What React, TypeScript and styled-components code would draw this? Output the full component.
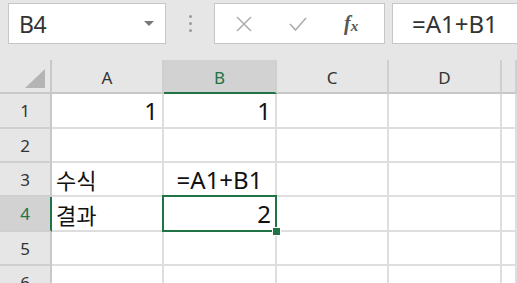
import React from "react";
import styled, { createGlobalStyle } from "styled-components";

const Global = createGlobalStyle`
  html, body { margin: 0; padding: 0; background: #e6e6e6; overflow: hidden; }
  body { width: 517px; height: 283px; }
`;

const Page = styled.div`
  width: 517px;
  height: 283px;
  overflow: hidden;
  background: #e6e6e6;
  font-family: "Noto Sans", "Open Sans", sans-serif;
`;

const Toolbar = styled.div`
  height: 60px;
  display: flex;
  align-items: flex-start;
  padding: 3px 0 0 8px;
  box-sizing: border-box;
  overflow: hidden;
`;

const Box = styled.div<{ $w: number; $open?: boolean }>`
  width: ${(p) => p.$w}px;
  height: 41px;
  box-sizing: border-box;
  background: #fff;
  border: 1px solid #c6c6c6;
  border-right-color: ${(p) => (p.$open ? "transparent" : "#c6c6c6")};
  display: flex;
  align-items: center;
  flex-shrink: 0;
`;

const NameText = styled.span`
  flex: 1;
  padding-left: 10px;
  font-size: 23px;
  color: #333;
  letter-spacing: -0.5px;
`;

const Caret = styled.span`
  width: 0;
  height: 0;
  border-left: 5px solid transparent;
  border-right: 5px solid transparent;
  border-top: 5px solid #777;
  margin-right: 11px;
`;

const Dots = styled.div`
  width: 48px;
  height: 41px;
  flex-shrink: 0;
  display: flex;
  flex-direction: column;
  align-items: center;
  justify-content: center;
  gap: 4px;
  span {
    width: 3px;
    height: 3px;
    border-radius: 50%;
    background: #9a9a9a;
  }
`;

const FxIcons = styled.div`
  flex: 1;
  display: flex;
  align-items: center;
  padding-left: 20px;
  gap: 35px;
`;

const Fx = styled.span`
  font-family: "Liberation Serif", serif;
  font-style: italic;
  font-weight: bold;
  font-size: 20px;
  color: #555;
  margin-left: 1px;
  sub {
    font-size: 15px;
    vertical-align: baseline;
    position: relative;
    top: 1px;
  }
`;

const FormulaText = styled.span`
  padding-left: 19px;
  font-size: 24px;
  color: #333;
  white-space: nowrap;
`;

const Grid = styled.div`
  display: grid;
  grid-template-columns: 52px 112px 113px 112px 113px 1fr;
  grid-template-rows: 34px 35px 34px 34px 35px 34px 34px;
  background: #fff;
`;

const Corner = styled.div`
  background: #e6e6e6;
  border-right: 2px solid #c8c8c8;
  border-bottom: 2px solid #c8c8c8;
  position: relative;
  &::after {
    content: "";
    position: absolute;
    right: 5px;
    bottom: 4px;
    width: 0;
    height: 0;
    border-left: 20px solid transparent;
    border-bottom: 19px solid #b4b4b4;
  }
`;

const ColHead = styled.div<{ $sel?: boolean }>`
  background: ${(p) => (p.$sel ? "#d2d2d2" : "#e6e6e6")};
  color: ${(p) => (p.$sel ? "#217346" : "#333")};
  border-right: 2px solid #cfcfcf;
  border-bottom: 2px solid ${(p) => (p.$sel ? "#217346" : "#c8c8c8")};
  display: flex;
  align-items: center;
  justify-content: center;
  font-size: 17px;
  padding-top: 2px;
  box-sizing: border-box;
`;

const RowHead = styled.div<{ $sel?: boolean }>`
  background: ${(p) => (p.$sel ? "#d2d2d2" : "#e6e6e6")};
  color: ${(p) => (p.$sel ? "#217346" : "#333")};
  border-right: 2px solid ${(p) => (p.$sel ? "#217346" : "#c8c8c8")};
  border-bottom: 2px solid #cfcfcf;
  display: flex;
  align-items: center;
  justify-content: center;
  font-size: 17px;
  box-sizing: border-box;
`;

const Cell = styled.div<{ $align?: "left" | "right" | "center" }>`
  position: relative;
  border-right: 2px solid #dedede;
  border-bottom: 2px solid #dedede;
  display: flex;
  align-items: center;
  justify-content: ${(p) =>
    p.$align === "right" ? "flex-end" : p.$align === "center" ? "center" : "flex-start"};
  padding: 0 4px 0 4px;
  box-sizing: border-box;
  font-family: "Noto Sans", "Noto Sans CJK KR", sans-serif;
  font-size: 24px;
  color: #111;
  white-space: nowrap;
`;

const Hangul = styled.span`
  font-family: "Noto Sans CJK KR", sans-serif;
  font-size: 22px;
  font-weight: 400;
`;

const Selection = styled.div`
  position: absolute;
  z-index: 2;
  left: -2px;
  top: -2px;
  right: -2px;
  bottom: -2px;
  border: 2px solid #217346;
  pointer-events: none;
  &::after {
    content: "";
    position: absolute;
    right: -6px;
    bottom: -6px;
    width: 7px;
    height: 7px;
    background: #217346;
    border: 1px solid #fff;
  }
`;

const cols = ["A", "B", "C", "D", ""];

type CellData = { text?: string; ko?: boolean; align?: "left" | "right" | "center"; sel?: boolean };

const rows: CellData[][] = [
  [{ text: "1", align: "right" }, { text: "1", align: "right" }, {}, {}, {}],
  [{}, {}, {}, {}, {}],
  [{ text: "수식", ko: true }, { text: "=A1+B1", align: "center" }, {}, {}, {}],
  [{ text: "결과", ko: true }, { text: "2", align: "right", sel: true }, {}, {}, {}],
  [{}, {}, {}, {}, {}],
  [{}, {}, {}, {}, {}],
];

export default function App() {
  return (
    <Page>
      <Global />
      <Toolbar>
        <Box $w={158}>
          <NameText>B4</NameText>
          <Caret />
        </Box>
        <Dots>
          <span />
          <span />
          <span />
        </Dots>
        <Box $w={171}>
          <FxIcons>
            <svg width="18" height="18" viewBox="0 0 18 18">
              <path d="M2 2 L16 16 M16 2 L2 16" stroke="#b0b0b0" strokeWidth="1.6" fill="none" />
            </svg>
            <svg width="20" height="18" viewBox="0 0 20 18">
              <path d="M2 9 L7.5 15 L18 3" stroke="#b0b0b0" strokeWidth="1.8" fill="none" />
            </svg>
            <Fx>
              f<sub>x</sub>
            </Fx>
          </FxIcons>
        </Box>
        <Box $w={140} $open style={{ marginLeft: 7 }}>
          <FormulaText>=A1+B1</FormulaText>
        </Box>
      </Toolbar>
      <Grid>
        <Corner />
        {cols.map((c, i) => (
          <ColHead key={i} $sel={c === "B"}>
            {c}
          </ColHead>
        ))}
        {rows.map((r, ri) => (
          <React.Fragment key={ri}>
            <RowHead $sel={ri === 3}>{ri + 1}</RowHead>
            {r.map((c, ci) => (
              <Cell key={ci} $align={c.align}>
                {c.ko ? <Hangul>{c.text}</Hangul> : c.text}
                {c.sel && <Selection />}
              </Cell>
            ))}
          </React.Fragment>
        ))}
      </Grid>
    </Page>
  );
}
